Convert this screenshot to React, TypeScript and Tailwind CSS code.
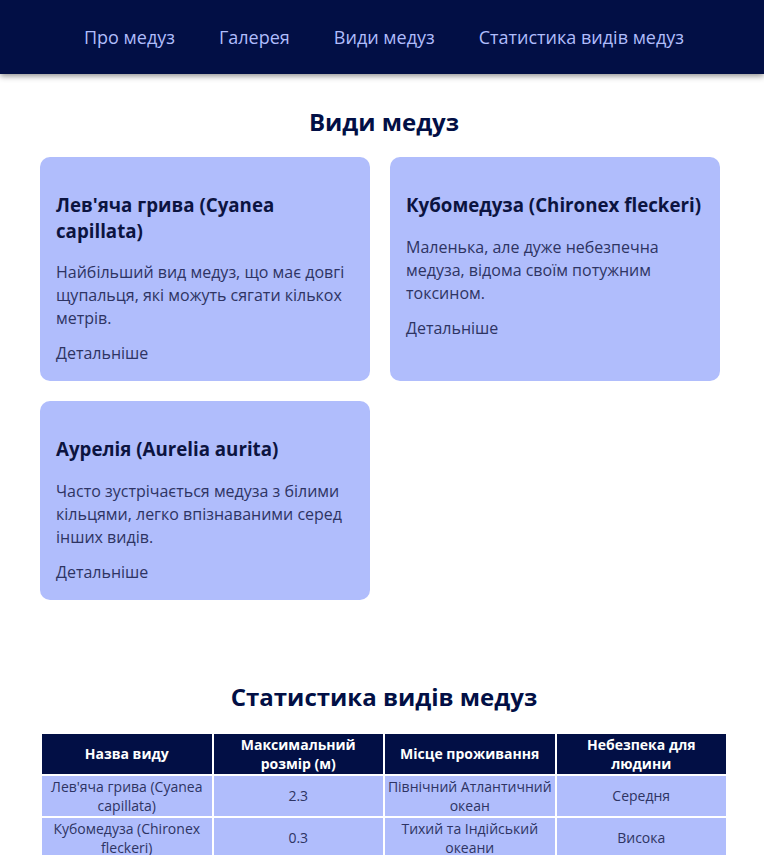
import React from "react";

const cards = [
  {
    title: "Лев'яча грива (Cyanea capillata)",
    text: "Найбільший вид медуз, що має довгі щупальця, які можуть сягати кількох метрів.",
  },
  {
    title: "Кубомедуза (Chironex fleckeri)",
    text: "Маленька, але дуже небезпечна медуза, відома своїм потужним токсином.",
  },
  {
    title: "Аурелія (Aurelia aurita)",
    text: "Часто зустрічається медуза з білими кільцями, легко впізнаваними серед інших видів.",
  },
];

const rows = [
  ["Лев'яча грива (Cyanea capillata)", "2.3", "Північний Атлантичний океан", "Середня"],
  ["Кубомедуза (Chironex fleckeri)", "0.3", "Тихий та Індійський океани", "Висока"],
  ["Аурелія (Aurelia aurita)", "0.4", "Світовий океан", "Низька"],
];

export default function App() {
  return (
    <div className="min-h-[855px] bg-white font-['Open_Sans',sans-serif]">
      <nav className="relative z-10 flex h-[74px] items-center justify-center gap-[44px] bg-[#020f45] pl-1 text-[18px] text-[#b0bdfc] shadow-[0_2px_6px_rgba(0,0,0,0.45)]">
        <a>Про медуз</a>
        <a>Галерея</a>
        <a>Види медуз</a>
        <a>Статистика видів медуз</a>
      </nav>

      <section className="pt-[31px]">
        <h2 className="pl-1 text-center text-[24px] font-bold leading-[33px] text-[#020f45]">Види медуз</h2>
        <div className="mt-[19px] grid grid-cols-[330px_330px] gap-5 pl-10">
          {cards.map((c) => (
            <div key={c.title} className="rounded-[10px] bg-[#b0bdfc] px-4 pb-4 pt-[35px]">
              <h3 className="text-[18.72px] font-bold leading-[25.5px] text-[#0c1440]">{c.title}</h3>
              <p className="mt-[18px] text-[16px] leading-[23px] text-[#2e3463]">{c.text}</p>
              <a className="mt-[12px] block text-[16px] leading-[23px] text-[#2e3463]">Детальніше</a>
            </div>
          ))}
        </div>
      </section>

      <section className="pt-[80px]">
        <h2 className="pl-1 text-center text-[24px] font-bold leading-[33px] text-[#020f45]">Статистика видів медуз</h2>
        <div className="ml-10 mt-[19px] w-[688px]">
          <table className="w-full table-fixed border-separate border-spacing-[2px] text-[14px] leading-[19px]">
            <thead>
              <tr>
                {["Назва виду", "Максимальний розмір (м)", "Місце проживання", "Небезпека для людини"].map((h) => (
                  <th key={h} className="h-[40px] bg-[#020f45] px-2 py-px text-center font-bold text-white">
                    {h}
                  </th>
                ))}
              </tr>
            </thead>
            <tbody>
              {rows.map((r) => (
                <tr key={r[0]}>
                  {r.map((v, i) => (
                    <td key={i} className="h-[40px] bg-[#b0bdfc] px-[2px] py-px text-center text-[#2e3463]">
                      {v}
                    </td>
                  ))}
                </tr>
              ))}
            </tbody>
          </table>
        </div>
      </section>
    </div>
  );
}
